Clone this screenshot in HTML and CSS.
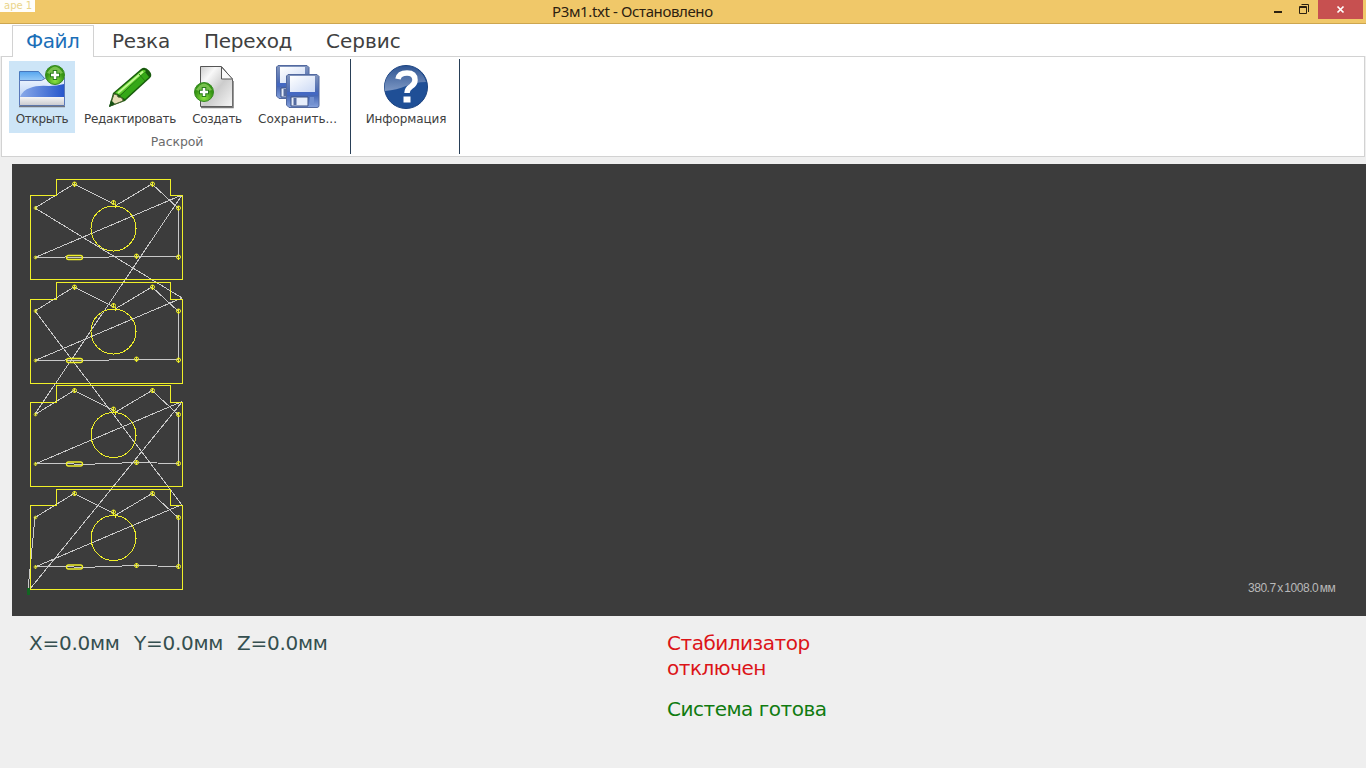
FILE: index.html
```html
<!DOCTYPE html>
<html lang="ru">
<head>
<meta charset="utf-8">
<title>Р3м1.txt - Остановлено</title>
<link rel="stylesheet" href="styles.css">
</head>
<body>
<header class="titlebar">
  <span class="badge">аре 1</span>
  <h1 class="title">Р3м1.txt - Остановлено</h1>
  <div class="window-buttons">
    <svg class="min" width="10" height="16"><path d="M1 12h8" stroke="#2c2110" stroke-width="2"/></svg>
    <svg class="max" width="12" height="16"><path d="M1.500 6.500h7v7h-7zM1 7.500h8M3.500 4.500h7v7.500" fill="none" stroke="#2c2110"/></svg>
    <span class="close"><svg width="10" height="10"><path d="M1.500 1.500l6 6m0-6l-6 6" stroke="#fff" stroke-width="1.700"/></svg></span>
  </div>
</header>
<nav class="tabs">
  <span class="tab active">Файл</span>
  <span class="tab cut">Резка</span>
  <span class="tab go">Переход</span>
  <span class="tab service">Сервис</span>
</nav>
<section class="ribbon">
  <div class="group files">
    <div class="tools">
      <div class="tool open">
        <svg width="50" height="46" viewBox="0 0 50 46">
          <defs>
            <linearGradient id="body" x1="0" y1="0" x2="0" y2="1"><stop stop-color="#f0f6ff"/><stop offset="1" stop-color="#a5c4f2"/></linearGradient>
            <linearGradient id="wave" x1="0" y1="0" x2="1" y2="0"><stop stop-color="#8aaae9"/><stop offset="1" stop-color="#2757cc"/></linearGradient>
            <linearGradient id="silver" x1="0" y1="0" x2="0" y2="1"><stop stop-color="#f5f5f5"/><stop offset="1" stop-color="#cccdd1"/></linearGradient>
            <radialGradient id="green" cx=".5" cy=".8"><stop stop-color="#8ee344"/><stop offset="1" stop-color="#359414"/></radialGradient>
            <linearGradient id="tabblue" x1="0" y1="0" x2="0" y2="1"><stop stop-color="#55a5ef"/><stop offset="1" stop-color="#c2e3fc"/></linearGradient>
          </defs>
          <path d="M2.500 7.500h19l6 7h19.500v8H2.500z" fill="url(#tabblue)" stroke="#4778bd"/>
          <path d="M2.500 16.500h22l5-3h18v28h-45z" fill="url(#body)" stroke="#5978b9"/>
          <path d="M3 33q3-7 10-9 7-3 19-2 8 0 15-2v13z" fill="url(#wave)"/>
          <path d="M3 33h44v8H3z" fill="url(#silver)"/>
          <path d="M2 42.500h46" stroke="#70757f" stroke-width="1.500"/>
          <circle cx="38" cy="11" r="9.500" fill="url(#green)" stroke="#358922"/>
          <path d="M30 9q8-13 16 0q-8 3-16 0" fill="#b9ec85" opacity=".5"/>
          <path d="M38 6v10M33 11h10" stroke="#277b18" stroke-width="4.500"/><path d="M38 7v8M34 11h8" stroke="#fff" stroke-width="2.500"/>
        </svg>
        <span class="label l-open">Открыть</span>
      </div>
      <div class="tool edit">
        <svg width="50" height="46" viewBox="0 0 50 46">
          <path d="M4 43l4-14L36 5q4-3 8 1.500t1 7.500L20 37z" fill="#185b0c"/>
          <path d="M10 29L36 7q3-2 5 0L15 31z" fill="#5bcc2b"/>
          <path d="M15 32L40 8l4 5-24 22z" fill="#35a817"/>
          <path d="M13 29L38 7.500" stroke="#c2f992" stroke-width="2"/>
          <path d="M34 10l6 7" stroke="#267d14"/>
          <path d="M5 42l4-12q4 0 4 3 5 0 5 4z" fill="#e7ddb8" stroke="#4b6132"/>
          <path d="M4 43l2-7 4 4z" fill="#185116"/>
        </svg>
        <span class="label l-edit">Редактировать</span>
      </div>
      <div class="tool create">
        <svg width="50" height="46" viewBox="0 0 50 46">
          <defs><linearGradient id="paper" x1="0" y1="0" x2="1" y2="1"><stop stop-color="#ccc"/><stop offset=".25" stop-color="#f8f8f8"/><stop offset=".55" stop-color="#ccc"/><stop offset="1" stop-color="#f6f6f6"/></linearGradient></defs>
          <path d="M8.500 2.500h21l11 13v27h-32z" fill="url(#paper)" stroke="#555"/>
          <path d="M9 43.500h32V17" fill="none" stroke="#777" stroke-width="1.500"/>
          <path d="M29.500 3v12h11z" fill="#fafafa" stroke="#555"/>
          <circle cx="12" cy="28" r="9.500" fill="url(#green)" stroke="#358922"/>
          <path d="M4 26q8-13 16 0q-8 3-16 0" fill="#b9ec85" opacity=".5"/>
          <path d="M12 23v10M7 28h10" stroke="#277b18" stroke-width="4.500"/><path d="M12 24v8M8 28h8" stroke="#fff" stroke-width="2.500"/>
        </svg>
        <span class="label l-create">Создать</span>
      </div>
      <div class="tool save">
        <svg width="50" height="46" viewBox="0 0 50 46">
          <defs>
            <linearGradient id="diskblue" x1="0" y1="0" x2="0" y2="1"><stop stop-color="#8396bd"/><stop offset=".6" stop-color="#4062b2"/><stop offset="1" stop-color="#86a2dd"/></linearGradient>
            <linearGradient id="sheet" x1="0" y1="0" x2="1" y2="1"><stop stop-color="#fff"/><stop offset="1" stop-color="#cbd9f5"/></linearGradient>
            <g id="disk"><path d="M2 .5h29l2 2v29q0 2-2 2H3L.5 31V2z" fill="url(#diskblue)" stroke="#5269a0"/><path d="M4 2h25v16H4z" fill="url(#sheet)"/><path d="M1 18h31v3H1z" fill="#4468c2"/><path d="M5 23h17v9H5z" fill="#e7eefb" stroke="#3b5084"/><path d="M9 24v7" stroke="#546ba0" stroke-width="3"/><path d="M24 23h4v8h-4z" fill="#7391d0"/></g>
          </defs>
          <use href="#disk" x="3" y="1"/><use href="#disk" x="13" y="10"/>
        </svg>
        <span class="label l-save">Сохранить...</span>
      </div>
    </div>
    <div class="group-name">Раскрой</div>
  </div>
  <div class="group info">
    <div class="tool help">
      <svg width="50" height="46" viewBox="0 0 50 46">
        <defs><linearGradient id="orb" x1="0" y1="0" x2="0" y2="1"><stop stop-color="#315693"/><stop offset="1" stop-color="#7b96c3"/></linearGradient></defs>
        <circle cx="25" cy="23" r="21.500" fill="#1f4f96" stroke="#1b427f"/>
        <path d="M4 27a21 21 0 0141-9q-11 0-20 4T4 27" fill="url(#orb)"/>
        <path d="M17 15q1-6 9-6t8 7q0 4-4 6.500t-4 6.500" fill="none" stroke="#fff" stroke-width="5.500"/><path d="M22.500 32.500h7v6h-7z" fill="#fff"/>
      </svg>
      <span class="label l-info">Информация</span>
    </div>
  </div>
</section>
<main class="viewer">
  <svg class="drawing" width="1354" height="452" viewBox="12 164 1354 452" shape-rendering="crispEdges">
    <defs>
      <g id="hole"><circle r="2" fill="none" stroke="#f0f028" shape-rendering="auto"/><path d="M0-2.500v5" stroke="#f0f028"/></g>
      <g id="part" fill="none">
        <path d="M35 208L74 184L114 204M115 206L152 184L178 208V257L136 256L82 258L66 257L35 257.500L182 195" stroke="#c9c9c9"/>
        <circle cx="113.500" cy="228.500" r="22.500" stroke="#f0f028"/>
        <path d="M115.500 204v4M135 228.500h2" stroke="#f0f028"/>
        <rect x="66.500" y="255.500" width="16" height="4" rx="2" stroke="#f0f028" stroke-width="1.300" shape-rendering="auto"/>
        <use href="#hole" x="74.500" y="184"/><use href="#hole" x="113.500" y="202.500"/><use href="#hole" x="152.500" y="184"/>
        <use href="#hole" x="178.500" y="208"/><use href="#hole" x="178.500" y="257"/><use href="#hole" x="136.500" y="256"/>
        <use href="#hole" transform="translate(35.500 208) scale(.7)"/><use href="#hole" transform="translate(35.500 257.500) scale(.7)"/>
      </g>
    </defs>
    <path d="M35 208L182 298M182 195L35 414M35 311L182 505M182 402L30 589M35 517L28 590" fill="none" stroke="#c9c9c9"/>
    <use href="#part"/><use href="#part" y="103"/><use href="#part" y="206.500"/><use href="#part" y="309.500"/>
    <g fill="none" stroke="#f0f028">
      <path d="M56.500 179.500H170.500V195.500H182.500V279.500H30.500V195.500H56.500Z"/>
      <path d="M56.500 282.500H170.500V299.500H182.500V383.500H30.500V299.500H56.500Z"/>
      <path d="M56.500 385.500H170.500V402.500H182.500V486.500H30.500V402.500H56.500Z"/>
      <path d="M56.500 489.500H170.500V505.500H182.500V589.500H30.500V505.500H56.500Z"/>
    </g>
    <path d="M27 588h3v7h-3z" fill="#126522"/>
  </svg>
  <span class="dimensions">380.7 x 1008.0 мм</span>
</main>
<footer class="status">
  <div class="coords"><span class="x">X=0.0мм</span><span class="y">Y=0.0мм</span><span class="z">Z=0.0мм</span></div>
  <div class="messages">
    <p class="error">Стабилизатор<br>отключен</p>
    <p class="ready">Система готова</p>
  </div>
</footer>
</body>
</html>
```
FILE: styles.css
```css
* { box-sizing: border-box; }
body { margin: 0; width: 1366px; height: 768px; overflow: hidden; background: #efefef; font-family: "DejaVu Sans", sans-serif; color: #404040; }
svg { display: block; flex-shrink: 0; }
.titlebar { position: relative; height: 24px; background: #f0c869; border-bottom: 1px solid #cda650; display: flex; justify-content: flex-end; }
.badge { position: absolute; left: 0; top: 0; width: 35px; height: 12px; padding-left: 4px; background: #fffefa; color: #ead489; font-size: 10px; line-height: 12px; white-space: nowrap; }
.title { position: absolute; left: 552px; top: 0; margin: 0; font: 15px/23px "Noto Sans", sans-serif; color: #2c2110; white-space: nowrap; letter-spacing: -.38px; }
.window-buttons { display: flex; padding-right: 3px; }
.max { margin: 0 8px 0 15px; }
.close { width: 45px; height: 19px; background: #c75050; display: flex; align-items: center; justify-content: center; }
.tabs { position: relative; z-index: 1; height: 33px; display: flex; padding: 1px 0 0 12px; font-size: 20px; line-height: 32px; letter-spacing: -.3px; }
.tabs::before { content: ""; position: absolute; z-index: -1; left: 0; top: 0; width: 100%; height: 32px; background: #fff; }
.tab { flex-shrink: 0; white-space: nowrap; }
.active { width: 82px; height: 32px; padding-left: 13px; background: #fff; border: 1px solid #d2d2d2; border-bottom: 0; color: #1b6fb8; line-height: 30px; letter-spacing: -.5px; }
.cut { width: 93px; padding-left: 18px; }
.go { width: 122px; padding-left: 17px; }
.service { padding-left: 17px; letter-spacing: 0; }
.ribbon { height: 101px; margin: -1px 1px 0; background: #fff; border: 1px solid #d2d2d2; display: flex; }
.group { height: 95px; margin-top: 2px; border-right: 1px solid #293f57; }
.files { width: 349px; padding: 2px 0 0 7px; }
.tools { display: flex; height: 72px; }
.tool { display: flex; flex-direction: column; align-items: center; padding-top: 3px; font-size: 12px; line-height: 18px; white-space: nowrap; letter-spacing: -.3px; }
.open { width: 66px; height: 72px; background: #cde5f7; }
.edit { width: 110px; }
.create { width: 64px; }
.save { width: 97px; }
.l-save { letter-spacing: 0; }
.info { width: 109px; padding: 2px 0 0 2px; }
.l-info { letter-spacing: -.1px; }
.group-name { width: 336px; text-align: center; font-size: 12.500px; line-height: 17px; color: #6b6b6b; letter-spacing: -.1px; }
.viewer { position: relative; height: 452px; margin: 7px 0 0 12px; background: #3c3c3c; }
.dimensions { position: absolute; left: 1236px; top: 416px; font: 12px/16px "Liberation Sans", sans-serif; color: #b9b9b9; white-space: nowrap; letter-spacing: -.47px; word-spacing: -1.300px; }
.status { display: flex; padding-top: 15px; font-size: 20px; line-height: 25px; white-space: nowrap; }
.coords { width: 667px; padding-left: 29px; display: flex; color: #354f50; letter-spacing: -.25px; }
.x { width: 105px; }
.y { width: 103px; }
.messages { letter-spacing: -.48px; }
.messages p { margin: 0 0 16px; }
.error { color: #dc1418; }
.ready { color: #107b10; }
```
